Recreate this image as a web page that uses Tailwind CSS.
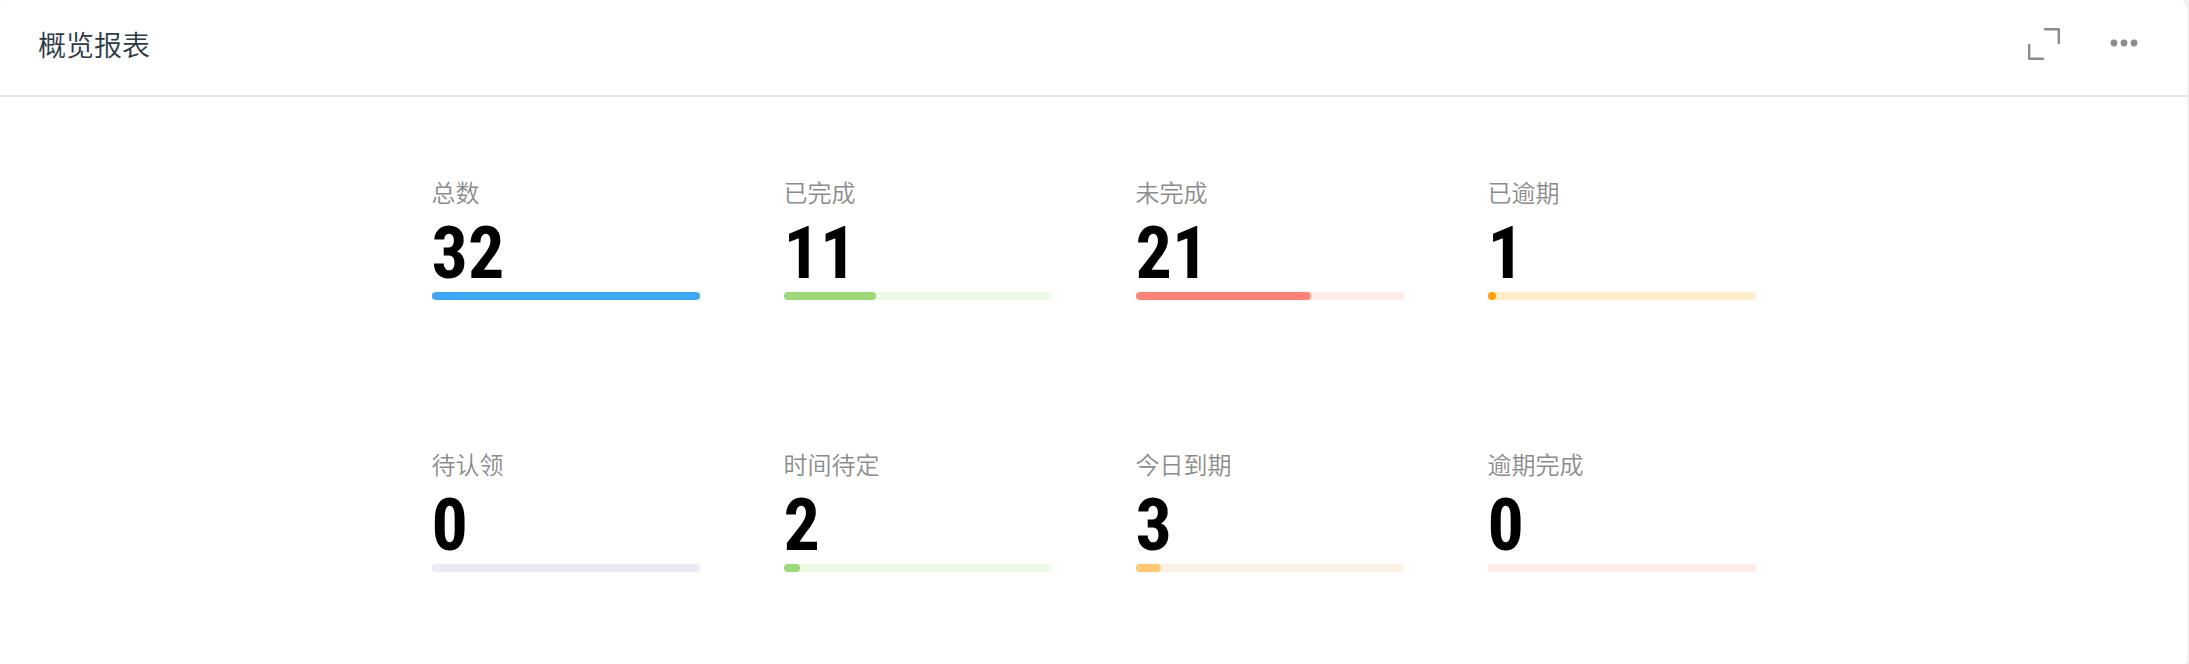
<!DOCTYPE html>
<html lang="zh-CN">
<head>
<meta charset="utf-8">
<meta name="viewport" content="width=device-width, initial-scale=1">
<title>概览报表</title>
<script src="https://cdn.jsdelivr.net/npm/@tailwindcss/browser@4"></script>
</head>
<body class="min-h-screen bg-[#f0f0f0] pr-0.5 font-['Noto_Sans_CJK_SC',sans-serif]">
<main class="flex min-h-screen flex-col rounded-tl-sm rounded-tr-lg rounded-br-sm bg-white">
  <header class="flex items-center justify-between border-b-2 border-[#e5e5e5] pt-4 pr-[49px] pb-[23px] pl-[38px]">
    <h1 class="text-[28px] leading-[56px] font-[350] text-[#2b3a48]">概览报表</h1>
    <div class="flex items-center gap-[50px] text-[#8c8c8c]">
      <button type="button" aria-label="全屏" class="cursor-pointer">
        <svg class="block size-8" viewBox="0 0 32 32" fill="none" stroke="currentColor" stroke-width="2.4" stroke-linecap="round" stroke-linejoin="round"><path d="M17 1.2H30.8V15M1.2 17V30.8H15"/></svg>
      </button>
      <button type="button" aria-label="更多" class="cursor-pointer">
        <svg class="block h-8 w-7" viewBox="0 0 28 32" fill="currentColor"><circle cx="4" cy="15" r="3.4"/><circle cx="14" cy="15" r="3.4"/><circle cx="24" cy="15" r="3.4"/></svg>
      </button>
    </div>
  </header>
  <section aria-label="任务统计" class="grid grid-cols-[repeat(4,268px)] justify-center gap-x-[84px] gap-y-[144px] pt-[75px] pb-16">
    <div>
      <h2 id="total" class="text-2xl leading-10 font-[350] text-[#8c8c8c]">总数</h2>
      <p class="pt-1 font-['Liberation_Sans_Narrow','Roboto_Condensed',Roboto,sans-serif] text-[72px] leading-[76px] font-bold text-black">32</p>
      <div role="progressbar" aria-labelledby="total" aria-valuenow="32" aria-valuemax="32" class="h-2 rounded-full bg-[#d8eefd]"><div class="h-2 min-w-2 rounded-full bg-[#3da8f5]" style="width:100%"></div></div>
    </div>
    <div>
      <h2 id="done" class="text-2xl leading-10 font-[350] text-[#8c8c8c]">已完成</h2>
      <p class="pt-1 font-['Liberation_Sans_Narrow','Roboto_Condensed',Roboto,sans-serif] text-[72px] leading-[76px] font-bold text-black">11</p>
      <div role="progressbar" aria-labelledby="done" aria-valuenow="11" aria-valuemax="32" class="h-2 rounded-full bg-[#effae9]"><div class="h-2 min-w-2 rounded-full bg-[#9dd977]" style="width:34.4%"></div></div>
    </div>
    <div>
      <h2 id="open" class="text-2xl leading-10 font-[350] text-[#8c8c8c]">未完成</h2>
      <p class="pt-1 font-['Liberation_Sans_Narrow','Roboto_Condensed',Roboto,sans-serif] text-[72px] leading-[76px] font-bold text-black">21</p>
      <div role="progressbar" aria-labelledby="open" aria-valuenow="21" aria-valuemax="32" class="h-2 rounded-full bg-[#ffebe9]"><div class="h-2 min-w-2 rounded-full bg-[#ff8274]" style="width:65.6%"></div></div>
    </div>
    <div>
      <h2 id="overdue" class="text-2xl leading-10 font-[350] text-[#8c8c8c]">已逾期</h2>
      <p class="pt-1 font-['Liberation_Sans_Narrow','Roboto_Condensed',Roboto,sans-serif] text-[72px] leading-[76px] font-bold text-black">1</p>
      <div role="progressbar" aria-labelledby="overdue" aria-valuenow="1" aria-valuemax="32" class="h-2 rounded-full bg-[#ffeccc]"><div class="h-2 min-w-2 rounded-full bg-[#ffa000]" style="width:3.1%"></div></div>
    </div>
    <div>
      <h2 id="unclaimed" class="text-2xl leading-10 font-[350] text-[#8c8c8c]">待认领</h2>
      <p class="pt-1 font-['Liberation_Sans_Narrow','Roboto_Condensed',Roboto,sans-serif] text-[72px] leading-[76px] font-bold text-black">0</p>
      <div role="progressbar" aria-labelledby="unclaimed" aria-valuenow="0" aria-valuemax="32" class="h-2 rounded-full bg-[#ebebf5]"></div>
    </div>
    <div>
      <h2 id="unscheduled" class="text-2xl leading-10 font-[350] text-[#8c8c8c]">时间待定</h2>
      <p class="pt-1 font-['Liberation_Sans_Narrow','Roboto_Condensed',Roboto,sans-serif] text-[72px] leading-[76px] font-bold text-black">2</p>
      <div role="progressbar" aria-labelledby="unscheduled" aria-valuenow="2" aria-valuemax="32" class="h-2 rounded-full bg-[#effae9]"><div class="h-2 min-w-2 rounded-full bg-[#9dd977]" style="width:6.3%"></div></div>
    </div>
    <div>
      <h2 id="today" class="text-2xl leading-10 font-[350] text-[#8c8c8c]">今日到期</h2>
      <p class="pt-1 font-['Liberation_Sans_Narrow','Roboto_Condensed',Roboto,sans-serif] text-[72px] leading-[76px] font-bold text-black">3</p>
      <div role="progressbar" aria-labelledby="today" aria-valuenow="3" aria-valuemax="32" class="h-2 rounded-full bg-[#fbf1e5]"><div class="h-2 min-w-2 rounded-full bg-[#ffc673]" style="width:9.4%"></div></div>
    </div>
    <div>
      <h2 id="late" class="text-2xl leading-10 font-[350] text-[#8c8c8c]">逾期完成</h2>
      <p class="pt-1 font-['Liberation_Sans_Narrow','Roboto_Condensed',Roboto,sans-serif] text-[72px] leading-[76px] font-bold text-black">0</p>
      <div role="progressbar" aria-labelledby="late" aria-valuenow="0" aria-valuemax="32" class="h-2 rounded-full bg-[#ffebe9]"></div>
    </div>
  </section>
</main>
</body>
</html>
